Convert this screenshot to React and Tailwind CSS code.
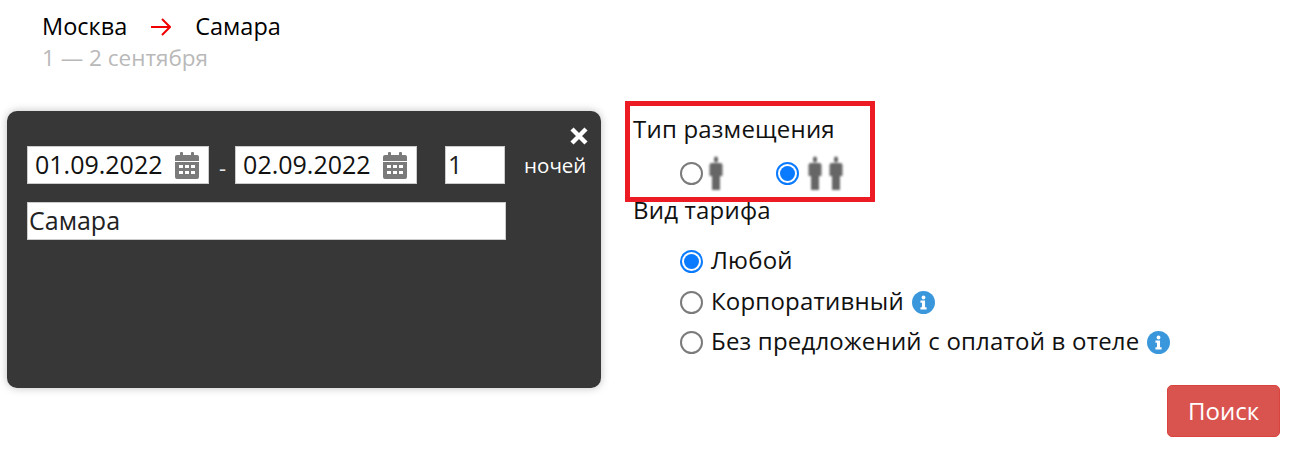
import React from 'react';

const CalendarIcon = () => (
  <svg viewBox="0 0 24 27" className="h-[27px] w-6 shrink-0" fill="#7a7a7a">
    <rect x="5" y="0" width="3" height="5" rx="1" />
    <rect x="16" y="0" width="3" height="5" rx="1" />
    <path d="M2 3h20a2 2 0 0 1 2 2v4H0V5a2 2 0 0 1 2-2z" />
    <path
      fillRule="evenodd"
      d="M0 10h24v15a2 2 0 0 1-2 2H2a2 2 0 0 1-2-2zM4 13v3h4v-3zM10 13v3h4v-3zM16 13v3h4v-3zM4 19v3h4v-3zM10 19v3h4v-3zM16 19v3h4v-3z"
    />
  </svg>
);

const DateField = ({ value }) => (
  <div className="flex h-[38px] w-[182px] items-center justify-between border border-[#ccc] bg-white pl-[7px] pr-[9px] text-[25px] text-[#111]">
    <span>{value}</span>
    <CalendarIcon />
  </div>
);

const Radio = ({ checked }) =>
  checked ? (
    <span className="flex h-[23px] w-[23px] shrink-0 items-center justify-center rounded-full border-2 border-[#0a7bff] bg-white">
      <span className="h-[15px] w-[15px] rounded-full bg-[#0a7bff]" />
    </span>
  ) : (
    <span className="h-[23px] w-[23px] shrink-0 rounded-full border-2 border-[#7b7b7b] bg-white" />
  );

const Person = () => (
  <svg viewBox="0 0 14 34" className="h-[34px] w-[14px] shrink-0 blur-[0.8px]" fill="#666">
    <rect x="5" y="0.5" width="4" height="6" rx="2" />
    <path d="M2 7h10l1.5 1.5V20h-2.5v14H3V20H0.5V8.5z" />
  </svg>
);

const InfoIcon = () => (
  <svg viewBox="0 0 24 24" className="h-[23px] w-[23px] shrink-0">
    <circle cx="12" cy="12" r="12" fill="#3a97dc" />
    <circle cx="12" cy="6.8" r="2" fill="#fff" />
    <path d="M8.8 10h4.8v7h1.6v2.2H8.8V17h1.6v-4.8H8.8z" fill="#fff" />
  </svg>
);

export default function App() {
  return (
    <div className="relative h-[454px] w-[1289px] overflow-hidden bg-white font-['Open_Sans',sans-serif] text-[#111]">
      {/* Route */}
      <div className="h-[111px] pl-[42px] pt-[12px]">
        <div className="flex h-[30px] items-center text-[23.5px] text-black">
          <span>Москва</span>
          <svg viewBox="0 0 20 18" className="ml-[24px] mr-[24px] h-[18px] w-[20px]" fill="none" stroke="#f00000" strokeWidth="2">
            <path d="M0 9h19M11 1l8 8-8 8" />
          </svg>
          <span>Самара</span>
        </div>
        <div className="mt-[1px] text-[22.5px] leading-[30px] text-[#b9b9b9]">1 — 2 сентября</div>
      </div>

      <div className="flex">
        {/* Dark panel */}
        <div className="relative ml-[7px] h-[277px] w-[594px] shrink-0 rounded-[10px] bg-[#373737] pl-5 pt-[35px] shadow-[0_0_8px_rgba(0,0,0,0.25)]">
          <svg viewBox="0 0 18 18" className="absolute right-[13px] top-[16px] h-[18px] w-[18px]" stroke="#fff" strokeWidth="4.4">
            <path d="M2 2l14 14M16 2L2 16" />
          </svg>
          <div className="flex items-center">
            <DateField value="01.09.2022" />
            <span className="ml-[10px] mr-[9px] mt-1 text-[22px] text-[#e6e6e6]">-</span>
            <DateField value="02.09.2022" />
            <div className="ml-[28px] flex h-[38px] w-[60px] items-center border border-[#ccc] bg-white pl-[2px] text-[25px] text-[#222]">1</div>
            <span className="ml-[19px] text-[20.5px] text-white">ночей</span>
          </div>
          <div className="mt-[18px] flex h-[38px] w-[479px] items-center border border-[#ccc] bg-white pl-[1px] text-[25px] text-[#222]">Самара</div>
        </div>

        {/* Options */}
        <div className="ml-[32px] flex flex-1 flex-col pr-[9px]">
          <div className="mt-[2px] text-[24px] leading-[32px] tracking-[0.2px]">Тип размещения</div>
          <div className="mt-[11px] flex h-[34px] items-center pl-[47px]">
            <Radio />
            <span className="ml-[6px]"><Person /></span>
            <span className="ml-[53px]"><Radio checked /></span>
            <span className="ml-[9px]"><Person /></span>
            <span className="ml-[7px]"><Person /></span>
          </div>
          <div className="mt-[2px] text-[24px] leading-[36px] tracking-[0.2px]">Вид тарифа</div>
          <div className="mt-[18px] flex flex-col gap-[9.5px] pl-[47px] text-[24px] leading-[31px] tracking-[0.2px]">
            <div className="flex h-[31px] items-center gap-2"><Radio checked /><span className="-mt-[4px]">Любой</span></div>
            <div className="flex h-[31px] items-center gap-2"><Radio /><span className="-mt-[4px]">Корпоративный</span><InfoIcon /></div>
            <div className="flex h-[31px] items-center gap-2"><Radio /><span className="-mt-[4px]">Без предложений с оплатой в отеле</span><InfoIcon /></div>
          </div>
          <button className="mt-[27px] h-[52px] w-[113px] self-end rounded-[5px] border border-[#d9443f] bg-[#d9534f] text-[24px] text-white">Поиск</button>
        </div>
      </div>

      {/* Annotation frame */}
      <div className="absolute left-[625px] top-[101px] h-[101px] w-[250px] border-[5px] border-[#ed1c24]" />
    </div>
  );
}
